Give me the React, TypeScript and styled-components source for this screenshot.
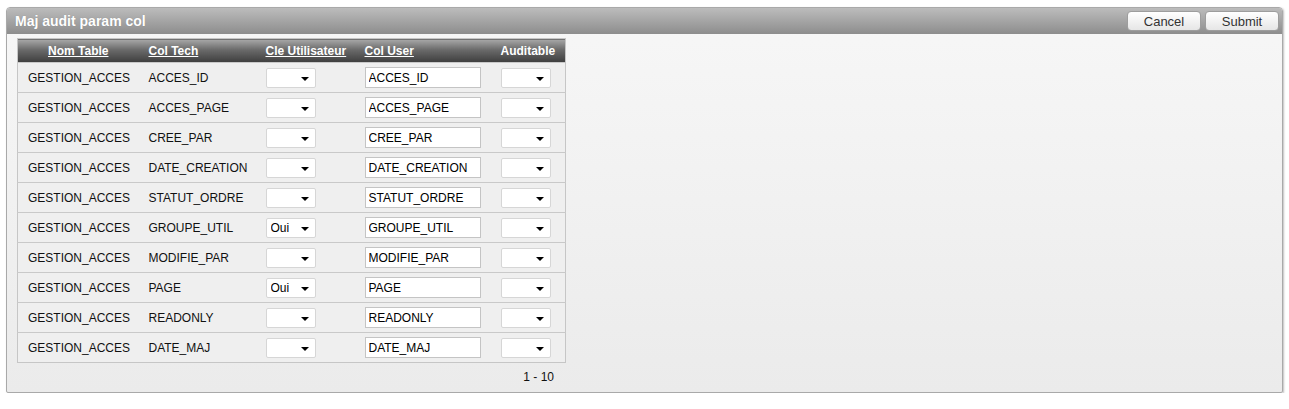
import * as React from "react";
import styled, { createGlobalStyle } from "styled-components";

const GlobalStyle = createGlobalStyle`
  body {
    margin: 0;
    background: #fff;
    font-family: "Liberation Sans", Arial, sans-serif;
  }
`;

const Page = styled.div`
  padding: 7px 6px 0 6px;
  width: 1277px;
`;

const Region = styled.div`
  border: 1px solid #a9a9a9;
  border-radius: 4px 4px 2px 2px;
  box-shadow: 1px 1px 2px rgba(0, 0, 0, 0.25);
  background: linear-gradient(to bottom, #f7f7f7, #ebebeb);
  height: 386px;
  box-sizing: border-box;
  overflow: hidden;
`;

const TitleBar = styled.div`
  display: flex;
  align-items: center;
  justify-content: space-between;
  height: 26px;
  padding: 0 3px 0 8px;
  background: linear-gradient(to bottom, #bcbcbc, #8d8d8d);
`;

const Title = styled.h1`
  margin: 0;
  font-size: 14px;
  font-weight: bold;
  color: #fff;
  text-shadow: 0 0 1px rgba(0, 0, 0, 0.2);
`;

const Buttons = styled.div`
  display: flex;
  gap: 4px;
`;

const Button = styled.button`
  width: 74px;
  height: 20px;
  padding: 0;
  border: 1px solid #9d9d9d;
  border-radius: 4px;
  background: linear-gradient(to bottom, #ffffff, #e6e6e6);
  font-family: "Liberation Sans", Arial, sans-serif;
  font-size: 13px;
  color: #333;
`;

const Body = styled.div`
  padding: 4px 0 0 10px;
`;

const Table = styled.table`
  border-collapse: collapse;
  table-layout: fixed;
  border: 1px solid #c6c6c6;
  width: 549px;
  font-size: 12px;
`;

const Th = styled.th<{ $align: string }>`
  height: 23px;
  padding: 0 10px;
  text-align: ${(p) => p.$align};
  background: linear-gradient(to bottom, #a8a8a8, #6a6a6a 45%, #3e3e3e);
  color: #fff;
  font-size: 12px;
  font-weight: bold;
  white-space: nowrap;
  overflow: visible;
`;

const HeadLink = styled.a<{ $plain?: boolean }>`
  color: #fff;
  text-decoration: ${(p) => (p.$plain ? "none" : "underline")};
`;

const Row = styled.tr`
  background: #efefef;
  border-top: 1px solid #c9c9c9;
`;

const Td = styled.td`
  height: 29px;
  padding: 0 10px;
  color: #111;
  white-space: nowrap;
  overflow: visible;
`;

const SelectBox = styled.span`
  position: relative;
  display: inline-block;
  width: 50px;
  height: 20px;
  vertical-align: middle;

  &::after {
    content: "";
    position: absolute;
    right: 7px;
    top: 9px;
    border-left: 4px solid transparent;
    border-right: 4px solid transparent;
    border-top: 4px solid #000;
    pointer-events: none;
  }
`;

const Select = styled.select`
  appearance: none;
  width: 100%;
  height: 100%;
  margin: 0;
  padding: 0 0 0 4px;
  border: 1px solid #d6d6d6;
  border-radius: 2px;
  background: #fff;
  font-family: "Liberation Sans", Arial, sans-serif;
  font-size: 12px;
  color: #000;
`;

const Input = styled.input`
  box-sizing: border-box;
  width: 116px;
  height: 21px;
  margin: 0;
  padding: 0 3px;
  border: 1px solid #c4c4c4;
  background: #fff;
  font-family: "Liberation Sans", Arial, sans-serif;
  font-size: 12px;
  color: #000;
  vertical-align: middle;
`;

const Pagination = styled.div`
  width: 549px;
  box-sizing: border-box;
  padding: 7px 12px 0 0;
  text-align: right;
  font-size: 12px;
  color: #111;
`;

const columns = [121, 117, 99, 136, 75];

const rows: { col: string; cle: string }[] = [
  { col: "ACCES_ID", cle: "" },
  { col: "ACCES_PAGE", cle: "" },
  { col: "CREE_PAR", cle: "" },
  { col: "DATE_CREATION", cle: "" },
  { col: "STATUT_ORDRE", cle: "" },
  { col: "GROUPE_UTIL", cle: "O" },
  { col: "MODIFIE_PAR", cle: "" },
  { col: "PAGE", cle: "O" },
  { col: "READONLY", cle: "" },
  { col: "DATE_MAJ", cle: "" },
];

const YesNo = ({ value }: { value: string }) => (
  <SelectBox>
    <Select defaultValue={value}>
      <option value=""></option>
      <option value="O">Oui</option>
      <option value="N">Non</option>
    </Select>
  </SelectBox>
);

export default function App() {
  return (
    <>
      <GlobalStyle />
      <Page>
        <Region>
          <TitleBar>
            <Title>Maj audit param col</Title>
            <Buttons>
              <Button>Cancel</Button>
              <Button>Submit</Button>
            </Buttons>
          </TitleBar>
          <Body>
            <Table>
              <colgroup>
                {columns.map((w, i) => (
                  <col key={i} style={{ width: w }} />
                ))}
              </colgroup>
              <thead>
                <tr>
                  <Th $align="center">
                    <HeadLink>Nom Table</HeadLink>
                  </Th>
                  <Th $align="left">
                    <HeadLink>Col Tech</HeadLink>
                  </Th>
                  <Th $align="left">
                    <HeadLink>Cle Utilisateur</HeadLink>
                  </Th>
                  <Th $align="left">
                    <HeadLink>Col User</HeadLink>
                  </Th>
                  <Th $align="left">
                    <HeadLink $plain>Auditable</HeadLink>
                  </Th>
                </tr>
              </thead>
              <tbody>
                {rows.map((r) => (
                  <Row key={r.col}>
                    <Td>GESTION_ACCES</Td>
                    <Td>{r.col}</Td>
                    <Td>
                      <YesNo value={r.cle} />
                    </Td>
                    <Td>
                      <Input defaultValue={r.col} />
                    </Td>
                    <Td>
                      <YesNo value="" />
                    </Td>
                  </Row>
                ))}
              </tbody>
            </Table>
            <Pagination>1 - 10</Pagination>
          </Body>
        </Region>
      </Page>
    </>
  );
}
